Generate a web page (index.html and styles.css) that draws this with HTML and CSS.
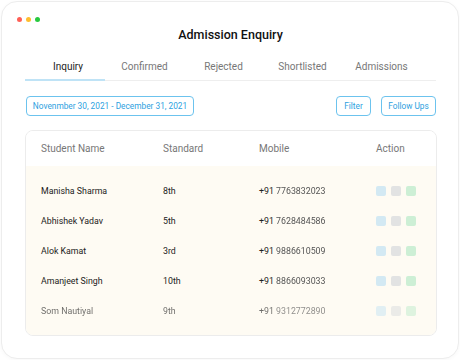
FILE: index.html
```html
<!DOCTYPE html>
<html>
<head>
<meta charset="utf-8">
<link rel="stylesheet" href="styles.css">
</head>
<body>
<div class="window">
  <div class="dots"><span class="dot red"></span><span class="dot amber"></span><span class="dot green"></span></div>
  <h1 class="title">Admission Enquiry</h1>
  <div class="tabs">
    <div class="tab active">Inquiry</div>
    <div class="tab">Confirmed</div>
    <div class="tab">Rejected</div>
    <div class="tab">Shortlisted</div>
    <div class="tab">Admissions</div>
  </div>
  <div class="toolbar">
    <button class="btn date">Novenmber 30, 2021 - December 31, 2021</button>
    <div class="spacer"></div>
    <button class="btn filter">Filter</button>
    <button class="btn follow">Follow Ups</button>
  </div>
  <div class="table">
    <div class="row head">
      <div class="c name">Student Name</div>
      <div class="c std">Standard</div>
      <div class="c mob">Mobile</div>
      <div class="c act">Action</div>
    </div>
    <div class="body">
      <div class="row">
        <div class="c name">Manisha Sharma</div>
        <div class="c std">8th</div>
        <div class="c mob">+91 <span class="blur">7763832023</span></div>
        <div class="c act"><span class="sq b"></span><span class="sq g"></span><span class="sq n"></span></div>
      </div>
      <div class="row">
        <div class="c name">Abhishek Yadav</div>
        <div class="c std">5th</div>
        <div class="c mob">+91 <span class="blur">7628484586</span></div>
        <div class="c act"><span class="sq b"></span><span class="sq g"></span><span class="sq n"></span></div>
      </div>
      <div class="row">
        <div class="c name">Alok Kamat</div>
        <div class="c std">3rd</div>
        <div class="c mob">+91 <span class="blur">9886610509</span></div>
        <div class="c act"><span class="sq b"></span><span class="sq g"></span><span class="sq n"></span></div>
      </div>
      <div class="row">
        <div class="c name">Amanjeet Singh</div>
        <div class="c std">10th</div>
        <div class="c mob">+91 <span class="blur">8866093033</span></div>
        <div class="c act"><span class="sq b"></span><span class="sq g"></span><span class="sq n"></span></div>
      </div>
      <div class="row faded">
        <div class="c name">Som Nautiyal</div>
        <div class="c std">9th</div>
        <div class="c mob">+91 <span class="blur">9312772890</span></div>
        <div class="c act"><span class="sq b"></span><span class="sq g"></span><span class="sq n"></span></div>
      </div>
    </div>
  </div>
</div>
</body>
</html>
```
FILE: styles.css
```css
* { box-sizing: border-box; }
html, body { margin: 0; padding: 0; background: #fff; }
body { font-family: Roboto, "Liberation Sans", sans-serif; }

.window {
  margin: 1px;
  width: 458px;
  height: 358px;
  border: 1px solid #ededed;
  border-radius: 16px;
  background: #fff;
  box-shadow: 0 1px 4px rgba(0,0,0,0.03);
  padding: 15px 22px 0 23px;
}

.dots { display: flex; gap: 4px; height: 5px; margin-left: -8px; }
.dot { width: 5px; height: 5px; border-radius: 50%; }
.red { background: #ff5f56; }
.amber { background: #ffbd2e; }
.green { background: #27c93f; }

.title {
  margin: 5px 0 0;
  text-align: center;
  font-size: 12.5px;
  font-weight: 500;
  color: #111;
  line-height: 16px;
}

.tabs {
  display: flex;
  margin-top: 17px;
  border-bottom: 1px solid #eee;
}
.tab {
  width: 79px;
  text-align: center;
  font-size: 10px;
  color: #777;
  line-height: 13px;
  padding-bottom: 6px;
  border-bottom: 2px solid transparent;
  margin-bottom: -1px;
}
.tab.active {
  width: 80px;
  padding-left: 6px;
  color: #222;
  border-bottom-color: #bfe3f6;
}

.toolbar {
  display: flex;
  align-items: center;
  gap: 10px;
  margin-top: 15px;
}
.spacer { flex: 1; }
.btn {
  font-family: Roboto, "Liberation Sans", sans-serif;
  height: 20px;
  border: 1.5px solid #6cc3ee;
  border-radius: 4px;
  background: #fff;
  color: #2e9fe0;
  font-size: 8.3px;
  padding: 0;
  line-height: 17px;
  text-align: center;
}
.btn.date { width: 168px; margin-left: 1px; }
.btn.filter { width: 35px; }
.btn.follow { width: 55px; }

.table {
  margin-top: 14px;
  border: 1px solid #ececec;
  border-radius: 8px;
  overflow: hidden;
  width: 412px;
}
.row {
  display: flex;
  align-items: center;
  height: 30px;
  font-size: 8.8px;
  color: #222;
}
.row.head {
  height: 35px;
  font-size: 10px;
  color: #777;
  background: #fff;
}
.body {
  background: #fefbf3;
  padding: 10px 0 9px;
}
.c.name { width: 137px; padding-left: 15px; }
.c.std { width: 96px; }
.c.mob { width: 117px; }
.c.act { display: flex; gap: 5px; }
.blur { color: #555; filter: blur(0.6px); }
.sq { width: 10px; height: 10px; border-radius: 2px; display: inline-block; }
.sq.b { background: #d3e9f3; }
.sq.g { background: #e2e3e3; }
.sq.n { background: #cdefd5; }
.faded { opacity: 0.65; }
```
